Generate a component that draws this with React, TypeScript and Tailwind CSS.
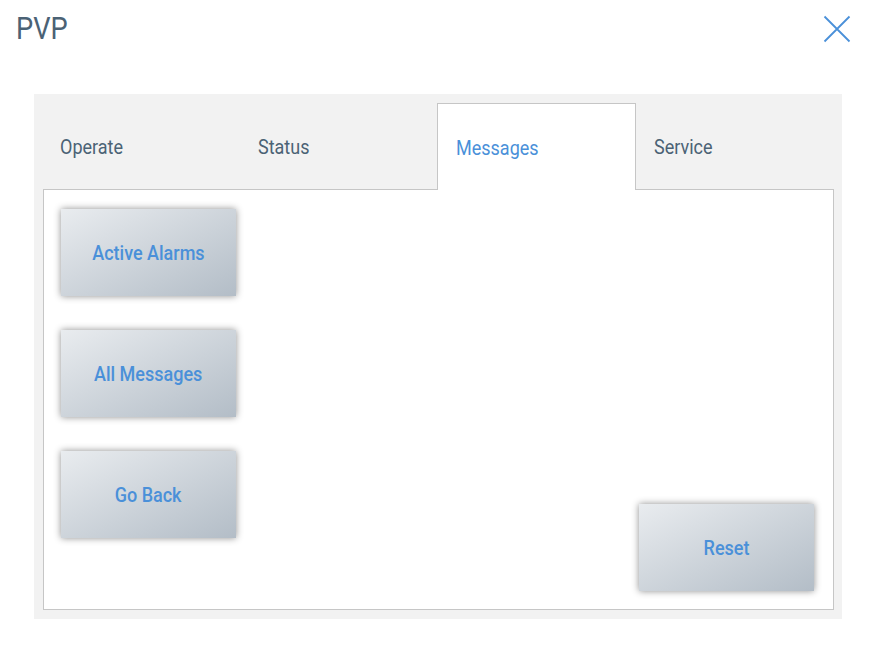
import { useState } from 'react';

const tabs = ['Operate', 'Status', 'Messages', 'Service'];

// Roboto squeezed horizontally to read like the condensed face
const Narrow = ({ children, className = '' }: { children: string; className?: string }) => (
  <span className={`inline-block scale-x-[0.9] ${className}`}>{children}</span>
);

const PanelButton = ({ label }: { label: string }) => (
  <button className="w-[175px] h-[87px] bg-gradient-to-br from-[#e9ecef] to-[#b3bdc7] shadow-[0_0_7px_rgba(0,0,0,0.45)] text-[#4a90d9] text-[20px] font-medium">
    <Narrow>{label}</Narrow>
  </button>
);

const App = () => {
  const [active, setActive] = useState('Messages');

  return (
    <div className="w-[874px] h-[660px] bg-white font-['Roboto',sans-serif]">
      {/* Header */}
      <div className="flex items-start justify-between pl-[16px] pr-[23px] pt-[8px] h-[94px]">
        <h1 className="text-[32px] leading-[40px] text-[#4b6275]">
          <span className="inline-block origin-left scale-x-[0.85]">PVP</span>
        </h1>
        <button className="mt-[7px]">
          <svg width="28" height="28" viewBox="0 0 28 28" fill="none" stroke="#4a90d9" strokeWidth="1.8">
            <path d="M1.5 1.5 L26.5 26.5 M26.5 1.5 L1.5 26.5" />
          </svg>
        </button>
      </div>

      {/* Tab panel */}
      <div className="mx-[34px] w-[808px] h-[525px] bg-[#f2f2f2] pl-[9px] pr-[8px] pt-[9px] pb-[9px] flex flex-col">
        <div className="flex h-[86px] relative z-10">
          {tabs.map((t, i) => {
            const on = t === active;
            const width = i === 3 ? 'flex-1' : on ? 'w-[199px]' : 'w-[197px]';
            const pad = i === 0 ? 'pl-[17px]' : 'pl-[18px]';
            return (
              <button
                key={t}
                onClick={() => setActive(t)}
                className={
                  on
                    ? `${width} h-[87px] bg-white border border-b-0 border-[#c6c6c6] text-left pl-[18px] pt-[1px] text-[20px] text-[#4a90d9]`
                    : `${width} h-[86px] text-left ${pad} pt-[2px] text-[20px] text-[#4b6275]`
                }
              >
                <Narrow className="origin-left">{t}</Narrow>
              </button>
            );
          })}
        </div>
        <div className="flex-1 bg-white border border-[#c6c6c6] flex justify-between items-end pl-[17px] pr-[19px] pt-[18px] pb-[18px]">
          <div className="self-start flex flex-col gap-[34px] pt-[1px]">
            <PanelButton label="Active Alarms" />
            <PanelButton label="All Messages" />
            <PanelButton label="Go Back" />
          </div>
          <PanelButton label="Reset" />
        </div>
      </div>
    </div>
  );
};

export default App;
